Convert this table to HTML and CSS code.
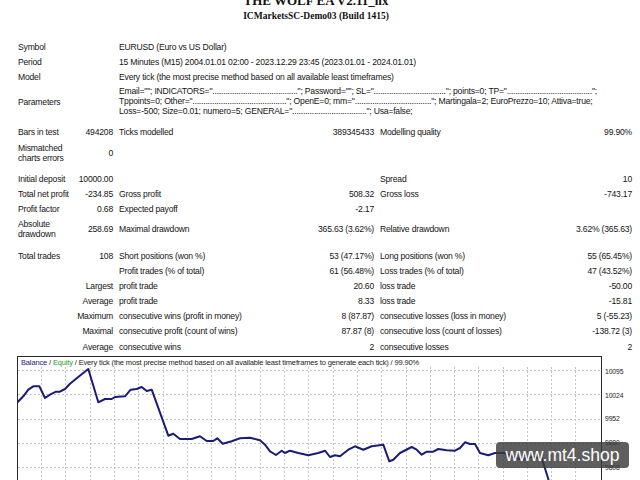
FILE: index.html
```html
<!DOCTYPE html>
<html>
<head>
<meta charset="utf-8">
<title>Strategy Tester: THE WOLF EA V2.11_lix</title>
<link rel="stylesheet" href="styles.css">
</head>
<body>
<header class="head">
  <div class="title">THE WOLF EA V2.11_lix</div>
  <div class="server">ICMarketsSC-Demo03 (Build 1415)</div>
</header>

<table class="report">
  <colgroup><col class="c1"><col class="c2"><col class="c3"><col class="c4"><col class="c5"><col class="c6"></colgroup>
  <tr><td colspan="2">Symbol</td><td colspan="4">EURUSD (Euro vs US Dollar)</td></tr>
  <tr><td colspan="2">Period</td><td colspan="4">15 Minutes (M15) 2004.01.01 02:00 - 2023.12.29 23:45 (2023.01.01 - 2024.01.01)</td></tr>
  <tr><td colspan="2">Model</td><td colspan="4">Every tick (the most precise method based on all available least timeframes)</td></tr>
  <tr><td colspan="2">Parameters</td><td colspan="4" class="params">Email=""; INDICATORS="......................................."; Password=""; SL="................................."; points=0; TP=".......................................";<br>Tppoints=0; Other="..........................................."; OpenE=0; mm="..................................."; Martingala=2; EuroPrezzo=10; Attiva=true;<br>Loss=-500; Size=0.01; numero=5; GENERAL=".................................."; Usa=false;</td></tr>
  <tr class="gap"><td colspan="6"></td></tr>
  <tr><td>Bars in test</td><td class="r">494208</td><td>Ticks modelled</td><td class="r">389345433</td><td>Modelling quality</td><td class="r">99.90%</td></tr>
  <tr><td class="wrap">Mismatched charts errors</td><td class="r">0</td><td></td><td></td><td></td><td></td></tr>
  <tr class="gap"><td colspan="6"></td></tr>
  <tr><td>Initial deposit</td><td class="r">10000.00</td><td></td><td></td><td>Spread</td><td class="r">10</td></tr>
  <tr><td>Total net profit</td><td class="r">-234.85</td><td>Gross profit</td><td class="r">508.32</td><td>Gross loss</td><td class="r">-743.17</td></tr>
  <tr><td>Profit factor</td><td class="r">0.68</td><td>Expected payoff</td><td class="r">-2.17</td><td></td><td></td></tr>
  <tr><td class="wrap">Absolute drawdown</td><td class="r">258.69</td><td>Maximal drawdown</td><td class="r">365.63 (3.62%)</td><td>Relative drawdown</td><td class="r">3.62% (365.63)</td></tr>
  <tr class="gap"><td colspan="6"></td></tr>
  <tr><td>Total trades</td><td class="r">108</td><td>Short positions (won %)</td><td class="r">53 (47.17%)</td><td>Long positions (won %)</td><td class="r">55 (65.45%)</td></tr>
  <tr><td></td><td></td><td>Profit trades (% of total)</td><td class="r">61 (56.48%)</td><td>Loss trades (% of total)</td><td class="r">47 (43.52%)</td></tr>
  <tr><td colspan="2" class="r">Largest</td><td>profit trade</td><td class="r">20.60</td><td>loss trade</td><td class="r">-50.00</td></tr>
  <tr><td colspan="2" class="r">Average</td><td>profit trade</td><td class="r">8.33</td><td>loss trade</td><td class="r">-15.81</td></tr>
  <tr><td colspan="2" class="r">Maximum</td><td>consecutive wins (profit in money)</td><td class="r">8 (87.87)</td><td>consecutive losses (loss in money)</td><td class="r">5 (-55.23)</td></tr>
  <tr><td colspan="2" class="r">Maximal</td><td>consecutive profit (count of wins)</td><td class="r">87.87 (8)</td><td>consecutive loss (count of losses)</td><td class="r">-138.72 (3)</td></tr>
  <tr><td colspan="2" class="r">Average</td><td>consecutive wins</td><td class="r">2</td><td>consecutive losses</td><td class="r">2</td></tr>
</table>

<section class="chart">
  <div class="chart-head"><span class="bal">Balance</span> / <span class="eq">Equity</span> / Every tick (the most precise method based on all available least timeframes to generate each tick) / 99.90%</div>
  <svg class="plot" width="583" height="130" viewBox="18 359 583 130" xmlns="http://www.w3.org/2000/svg">
    <path class="grid" d="M41.5 369V489M65.5 369V489M90.5 369V489M114.5 369V489M138.5 369V489M163.5 369V489M187.5 369V489M211.5 369V489M235.5 369V489M260.5 369V489M284.5 369V489M308.5 369V489M333.5 369V489M357.5 369V489M381.5 369V489M406.5 369V489M430.5 369V489M454.5 369V489M478.5 369V489M503.5 369V489M527.5 369V489M551.5 369V489M575.5 369V489M18 372.5H601M18 396.5H601M18 421.5H601M18 445.5H601M18 469.5H601"/>
    <polyline class="balance" points="17.5,404.3 23.3,398.3 28.3,391.7 33.3,388.3 39.3,388.3 45,400 50,396.7 56,393.7 60,393.7 65,391 70,385.7 76.7,380.3 88.3,371 98.3,404.3 105,401 111.7,401 115,399 125,398.3 130.7,391.7 136.7,391 141.7,389 146.7,393 151.7,391.7 168.3,437.7 173.3,435.7 180,441 191.7,441 200,438.3 206.7,443 213.3,443 217.3,440.3 222.7,445.7 231.7,443.3 240,440.3 250,439.7 260,442.3 265,446.7 270,453.3 276,457 281.7,452.7 285,455 290,452.7 298.3,455 308.3,457.3 318.3,455 325,452.7 330,459 335,457.3 340,458.3 348.3,451.7 355,448.3 363.3,451.7 371.7,448.3 383.3,446.7 389.3,463.3 393.3,461.7 400,455 411.7,449 416.7,451.7 421.7,456.7 426.7,453.7 433.3,453.7 438.3,451 446.7,452.3 455,452.7 460,450 465,444.3 470,446 475,446 480,455 488.3,457.3 495,455 505,455 515,460 523,461.7 532,459 541.7,460 548,480 551,490"/>
  </svg>
  <span class="ylab t1">10095</span>
  <span class="ylab t2">10024</span>
  <span class="ylab t3">9952</span>
  <span class="ylab t4">9880</span>
  <span class="ylab t5">9808</span>
  <div class="mark">www.mt4.shop</div>
</section>
</body>
</html>
```

FILE: styles.css
```css
html, body {
  margin: 0;
  padding: 0;
  overflow: hidden;
  background: #fff;
}

body {
  width: 640px;
  height: 480px;
  font-family: "Liberation Sans", Arial, sans-serif;
  font-size: 8.6px;
  letter-spacing: -0.2px;
  color: #141414;
}

.head {
  text-align: center;
  font-family: "Liberation Serif", "Times New Roman", serif;
  font-weight: bold;
  letter-spacing: 0;
  color: #111;
  padding-right: 8px;
}

.title {
  font-size: 13px;
  line-height: 14px;
  margin-top: -5.6px;
}

.server {
  font-size: 9.5px;
  line-height: 12px;
  margin-top: 1.5px;
}

.report {
  border-collapse: collapse;
  table-layout: fixed;
  width: 620px;
  margin: 17.4px 0 0 15px;
}

.c1 { width: 60px; }
.c2 { width: 41px; }
.c3 { width: 184px; }
.c4 { width: 77px; }
.c5 { width: 183px; }
.c6 { width: 75px; }

.report td {
  padding: 2.6px 3px;
  line-height: 10px;
  white-space: nowrap;
  text-align: left;
  vertical-align: middle;
  overflow: visible;
}

.report td.r { text-align: right; }
.report td.wrap { white-space: normal; }
.report td.params { line-height: 9.6px; }

.report .gap td {
  height: 6px;
  padding: 0;
}

.chart {
  position: relative;
  width: 583px;
  height: 130px;
  margin: 2.2px 0 0 17px;
  border: 1px solid #2a2a2a;
}

.chart-head {
  position: relative;
  z-index: 1;
  font-size: 7.5px;
  letter-spacing: -0.15px;
  line-height: 10px;
  padding: 1px 0 0 3px;
  color: #1a1a1a;
}

.bal { color: #1b1b7a; }
.eq { color: #2e9e2e; }

.plot {
  position: absolute;
  left: 0;
  top: 0;
}

.grid {
  fill: none;
  stroke: #c4c4c4;
  stroke-width: 1;
  stroke-dasharray: 2 2;
}

.balance {
  fill: none;
  stroke: #1b1b78;
  stroke-width: 2;
  stroke-linejoin: round;
}

.ylab {
  position: absolute;
  left: 587px;
  font-size: 6.8px;
  letter-spacing: -0.1px;
  line-height: 8px;
  color: #222;
}

.t1 { top: 10.3px; }
.t2 { top: 34.7px; }
.t3 { top: 58px; }
.t4 { top: 82px; }
.t5 { top: 107px; }

.mark {
  position: absolute;
  z-index: 2;
  left: 478px;
  top: 85px;
  width: 133px;
  height: 26px;
  border-radius: 4px;
  background: rgba(58, 58, 58, 0.82);
  color: #fff;
  font-size: 17.5px;
  letter-spacing: 0;
  line-height: 26px;
  text-align: center;
}
```
